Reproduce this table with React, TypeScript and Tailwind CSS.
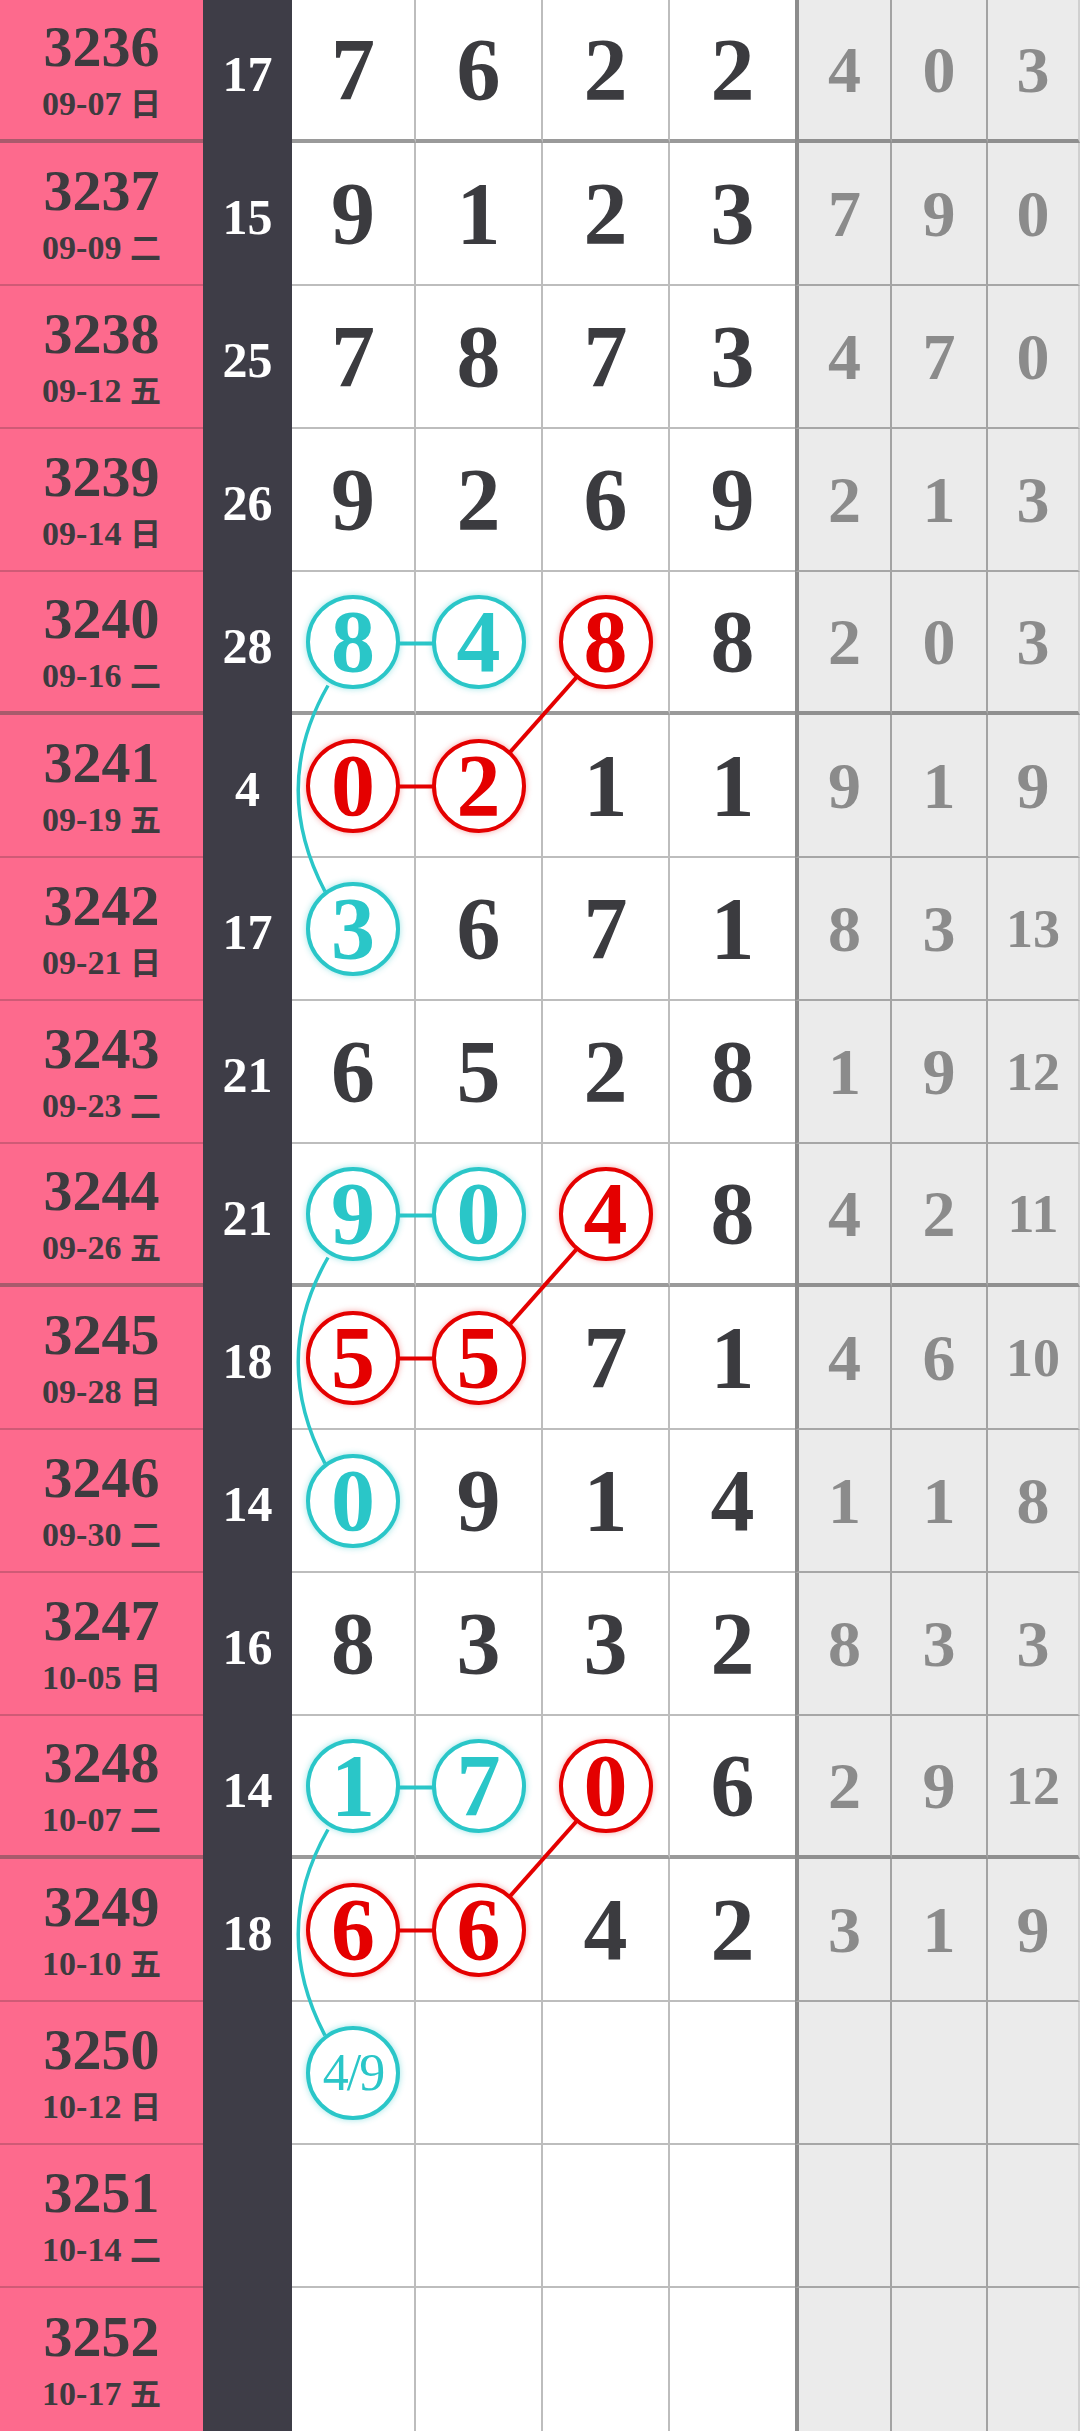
import React from "react";

type Row = { id: string; date: string; day: string; sum: string; d: string[]; g: string[] };

const rows: Row[] = [
  { id: "3236", date: "09-07", day: "日", sum: "17", d: ["7", "6", "2", "2"], g: ["4", "0", "3"] },
  { id: "3237", date: "09-09", day: "二", sum: "15", d: ["9", "1", "2", "3"], g: ["7", "9", "0"] },
  { id: "3238", date: "09-12", day: "五", sum: "25", d: ["7", "8", "7", "3"], g: ["4", "7", "0"] },
  { id: "3239", date: "09-14", day: "日", sum: "26", d: ["9", "2", "6", "9"], g: ["2", "1", "3"] },
  { id: "3240", date: "09-16", day: "二", sum: "28", d: ["8", "4", "8", "8"], g: ["2", "0", "3"] },
  { id: "3241", date: "09-19", day: "五", sum: "4", d: ["0", "2", "1", "1"], g: ["9", "1", "9"] },
  { id: "3242", date: "09-21", day: "日", sum: "17", d: ["3", "6", "7", "1"], g: ["8", "3", "13"] },
  { id: "3243", date: "09-23", day: "二", sum: "21", d: ["6", "5", "2", "8"], g: ["1", "9", "12"] },
  { id: "3244", date: "09-26", day: "五", sum: "21", d: ["9", "0", "4", "8"], g: ["4", "2", "11"] },
  { id: "3245", date: "09-28", day: "日", sum: "18", d: ["5", "5", "7", "1"], g: ["4", "6", "10"] },
  { id: "3246", date: "09-30", day: "二", sum: "14", d: ["0", "9", "1", "4"], g: ["1", "1", "8"] },
  { id: "3247", date: "10-05", day: "日", sum: "16", d: ["8", "3", "3", "2"], g: ["8", "3", "3"] },
  { id: "3248", date: "10-07", day: "二", sum: "14", d: ["1", "7", "0", "6"], g: ["2", "9", "12"] },
  { id: "3249", date: "10-10", day: "五", sum: "18", d: ["6", "6", "4", "2"], g: ["3", "1", "9"] },
  { id: "3250", date: "10-12", day: "日", sum: "", d: ["4/9", "", "", ""], g: ["", "", ""] },
  { id: "3251", date: "10-14", day: "二", sum: "", d: ["", "", "", ""], g: ["", "", ""] },
  { id: "3252", date: "10-17", day: "五", sum: "", d: ["", "", "", ""], g: ["", "", ""] },
];

// circled cells: row index -> column -> colour
const marks: Record<string, "c" | "r"> = {
  "4-0": "c", "4-1": "c", "4-2": "r", "5-0": "r", "5-1": "r", "6-0": "c",
  "8-0": "c", "8-1": "c", "8-2": "r", "9-0": "r", "9-1": "r", "10-0": "c",
  "12-0": "c", "12-1": "c", "12-2": "r", "13-0": "r", "13-1": "r", "14-0": "c",
};

const ROW = 143;
const cy = (i: number) => ROW * i + 71.5;
const cx = [354, 479.5, 606.5, 732.5];
const CYAN = "#2ac6c8";
const RED = "#e40000";

const serif = "font-['Liberation_Serif','Times_New_Roman',serif]";

function Links() {
  const groups = [4, 8, 12];
  return (
    <svg className="absolute left-0 top-0 pointer-events-none" width={1080} height={2433}>
      {groups.map((i) => (
        <g key={i} fill="none" strokeWidth={4}>
          <line x1={cx[0]} y1={cy(i)} x2={cx[1]} y2={cy(i)} stroke={CYAN} />
          <line x1={cx[0]} y1={cy(i + 1)} x2={cx[1]} y2={cy(i + 1)} stroke={RED} />
          <line x1={cx[1]} y1={cy(i + 1)} x2={cx[2]} y2={cy(i)} stroke={RED} />
          <path
            d={`M ${cx[0] - 26} ${cy(i) + 42} Q 270 ${(cy(i) + cy(i + 2)) / 2} ${cx[0] - 29} ${cy(i + 2) - 38}`}
            stroke={CYAN}
            strokeWidth={3.5}
          />
        </g>
      ))}
    </svg>
  );
}

function Digit({ v, mark }: { v: string; mark?: "c" | "r" }) {
  if (!mark) return <span className="text-[88px] leading-none font-bold text-[#3b3b3f]">{v}</span>;
  const small = v.length > 1;
  return (
    <div
      className={`relative z-10 w-[94px] h-[94px] rounded-full bg-white border-4 flex items-center justify-center ${
        mark === "c"
          ? "border-[#2ac6c8] text-[#2ac6c8] shadow-[0_0_6px_rgba(42,198,200,0.45)]"
          : "border-[#e40000] text-[#e40000] shadow-[0_0_6px_rgba(228,0,0,0.35)]"
      }`}
    >
      <span className={small ? "text-[52px] leading-none font-normal tracking-[-2px]" : "text-[88px] leading-none font-bold"}>{v}</span>
    </div>
  );
}

export default function App() {
  return (
    <div className={`relative w-[1080px] h-[2433px] overflow-hidden bg-white ${serif}`}>
      {rows.map((r, i) => {
        const last = i === rows.length - 1;
        const thick = i % 4 === 0;
        const lineB = last ? "" : thick ? "border-b-4 border-b-[#9a9a9a]" : "border-b-2 border-b-[#bdbdbd]";
        const pinkB = last ? "" : thick ? "border-b-4 border-b-[#a95a6c]" : "border-b-2 border-b-[#cf5a76]";
        const grayB = last ? "" : thick ? "border-b-4 border-b-[#8f8f8f]" : "border-b-2 border-b-[#a6a6a6]";
        return (
          <div key={r.id} className="grid grid-cols-[203px_89px_124px_127px_127px_125px_97px_96px_92px] h-[143px]">
            <div className={`bg-[#fd6a8d] flex flex-col items-center justify-center text-[#3d3b3f] ${pinkB}`}>
              <span className="text-[58px] leading-none font-bold">{r.id}</span>
              <span className="mt-[10px] text-[34px] leading-none font-bold whitespace-nowrap">
                {r.date}{" "}
                <span className="font-['Noto_Sans_CJK_SC',sans-serif] text-[31px]">{r.day}</span>
              </span>
            </div>
            <div className="bg-[#3e3d47] flex items-center justify-center pt-[4px]">
              <span className="text-[50px] leading-none font-bold text-white">{r.sum}</span>
            </div>
            {r.d.map((v, j) => (
              <div
                key={j}
                className={`flex items-center justify-center bg-white ${lineB} ${j < 3 ? "border-r-2 border-r-[#bdbdbd]" : ""}`}
              >
                {v && <Digit v={v} mark={marks[`${i}-${j}`]} />}
              </div>
            ))}
            {r.g.map((v, j) => (
              <div
                key={j}
                className={`flex items-center justify-center bg-[#ebebeb] ${grayB} ${
                  j === 0 ? "border-l-4 border-l-[#8c8c8c] border-r-2 border-r-[#a3a3a3]" : j === 1 ? "border-r-2 border-r-[#a3a3a3]" : "border-r-2 border-r-[#d0d0d0]"
                }`}
              >
                <span className={`${v.length > 1 ? "text-[54px]" : "text-[66px]"} leading-none font-bold text-[#8b8b8b]`}>{v}</span>
              </div>
            ))}
          </div>
        );
      })}
      <Links />
    </div>
  );
}
